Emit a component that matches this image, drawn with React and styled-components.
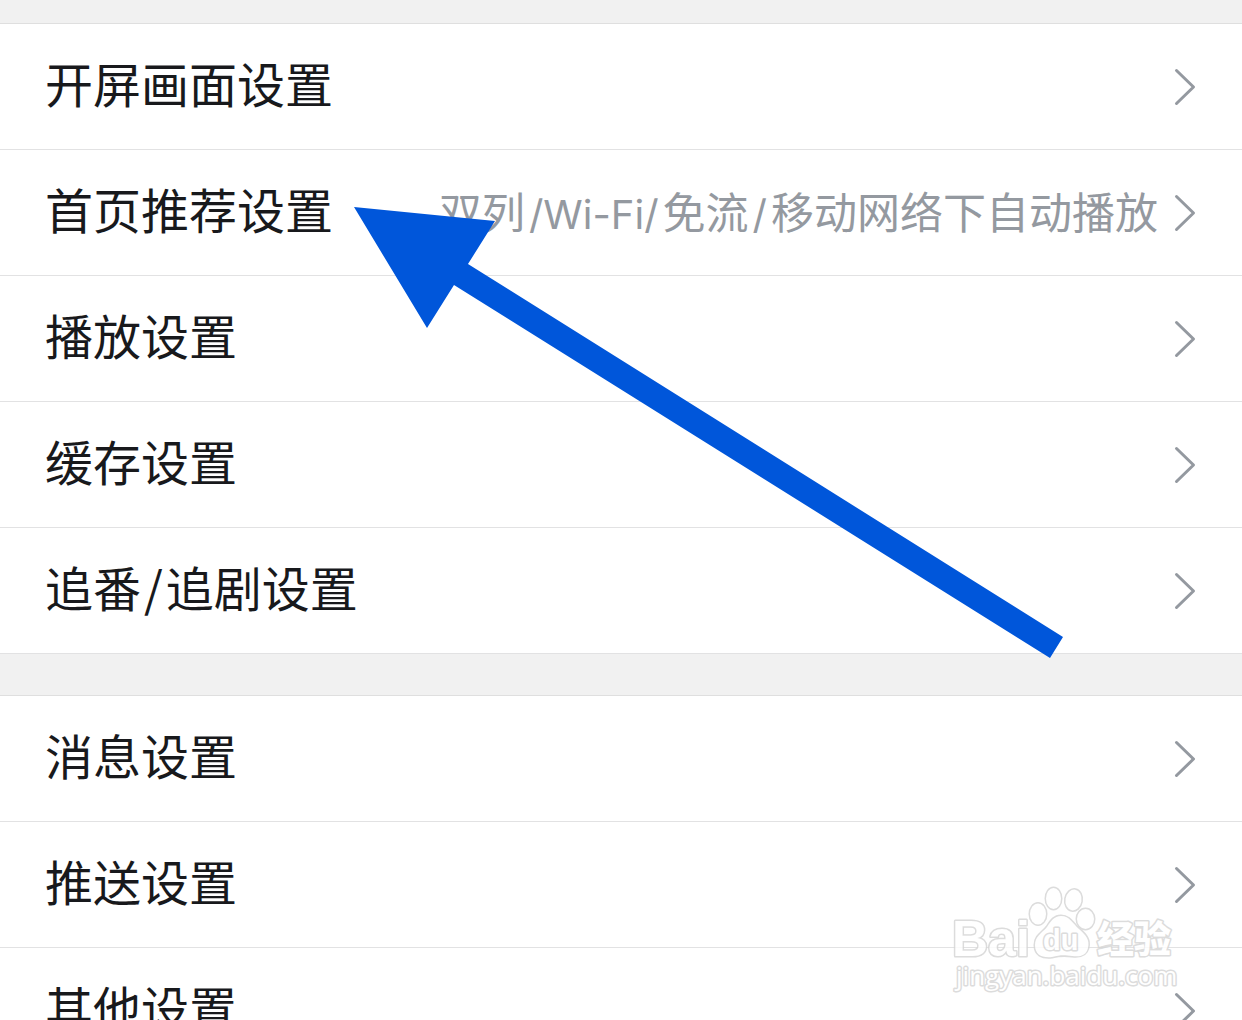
import React from 'react'
import styled, { createGlobalStyle } from 'styled-components'

//Style
const GlobalStyle = createGlobalStyle`
    *{
        box-sizing: border-box;
    }
    body{
        margin: 0;
        background: #f1f1f1;
        font-family: Inter, "Noto Sans CJK SC", sans-serif;
    }
`

const Page = styled.main`
    position: relative;
    height: 100vh;
    padding-top: 23px;
    overflow: hidden;
`

const Group = styled.nav`
    margin-bottom: 41px;
    border-top: 1px solid #dfdfdf;
    background: #ffffff;
`

const Row = styled.a`
    display: flex;
    align-items: center;
    height: 126px;
    padding: 0 46px 0 45px;
    border-bottom: 1px solid #e2e2e3;
    color: #18191c;
    text-decoration: none;
`

const Label = styled.span`
    flex: 1;
    padding-bottom: 2px;
    font-size: 48px;
    line-height: 72px;
    white-space: nowrap;
`

const Value = styled.span`
    margin-right: 16px;
    color: #9499a0;
    font-size: 43px;
    line-height: 72px;
    white-space: nowrap;
`

const Slash = styled.span`
    margin: 0 3px;
    font-family: "Noto Sans CJK SC", sans-serif;
    line-height: 1;
`

const Latin = styled.span`
    margin: 0 4px;
    font-size: 40px;
    line-height: 1;
`

const Chevron = styled.svg`
    flex: none;
    width: 22px;
    height: 40px;
    fill: none;
    stroke: #9499a0;
    stroke-width: 3;
    stroke-linecap: round;
    stroke-linejoin: round;
`

const Arrow = styled.svg`
    position: absolute;
    top: 207px;
    left: 354px;
    width: 710px;
    height: 452px;
    fill: #0056da;
    pointer-events: none;
`

const Watermark = styled.svg`
    position: absolute;
    right: 62px;
    bottom: 22px;
    width: 230px;
    height: 116px;
    fill: #ffffff;
    stroke: #d6d6d6;
    stroke-width: 3;
    stroke-linejoin: round;
    paint-order: stroke;
    opacity: 0.85;
    pointer-events: none;
`

const groups = [
    [
        { id: 'splash', title: '开屏画面设置' },
        { id: 'home', title: '首页推荐设置', value: '双列/Wi-Fi/免流/移动网络下自动播放' },
        { id: 'play', title: '播放设置' },
        { id: 'cache', title: '缓存设置' },
        { id: 'bangumi', title: '追番/追剧设置' },
    ],
    [
        { id: 'message', title: '消息设置' },
        { id: 'push', title: '推送设置' },
        { id: 'other', title: '其他设置' },
    ],
]

//wraps every latin run of a chinese text
const mixed = (text, Run) => text.split(/([!-~]+)/).map((part, i) => (
    i % 2 ? <Run key={i}>{part}</Run> : part
))

export default () => {
    return (
        <>
            <GlobalStyle />
            <Page>
                {groups.map((rows, i) => (
                    <Group key={i}>
                        {rows.map(row => (
                            <Row key={row.id} href={'#' + row.id}>
                                <Label>{mixed(row.title, Slash)}</Label>
                                {row.value && <Value>{mixed(row.value, Latin)}</Value>}
                                <Chevron viewBox="0 0 22 40" aria-hidden="true">
                                    <path d="M2.500 3.500L19.500 20L2.500 36.500" />
                                </Chevron>
                            </Row>
                        ))}
                    </Group>
                ))}

                <Arrow viewBox="0 0 710 452" aria-hidden="true">
                    <polygon points="0,0 141,14 114,57 709,430 696,451 100,78 73,121" />
                </Arrow>

                <Watermark viewBox="950 882 230 116">
                    <ellipse cx="1038" cy="914" rx="8" ry="10.500" />
                    <ellipse cx="1053.500" cy="898.500" rx="7.500" ry="10.500" />
                    <ellipse cx="1073.500" cy="900" rx="8" ry="10.500" transform="rotate(10 1073.500 900)" />
                    <ellipse cx="1085.500" cy="919" rx="8.500" ry="10" />
                    <path d="M1061 916C1070 916 1073 924 1079 929C1086 935 1090 940 1088 948C1086 956 1080 957 1072 956C1064 955 1060 955 1052 957C1042 958 1035 955 1035 945C1035 936 1042 933 1047 927C1051 921 1054 916 1061 916Z" />
                    <text x="952" y="956" fontFamily="Liberation Sans, sans-serif" fontSize="50" fontWeight="700">Bai</text>
                    <text x="1043" y="950" fontFamily="Liberation Sans, sans-serif" fontSize="29" fontWeight="700">du</text>
                    <text x="1097" y="953" fontFamily="Noto Sans CJK SC, sans-serif" fontSize="37" fontWeight="900">经验</text>
                    <text x="956" y="985" fontFamily="Open Sans, sans-serif" fontSize="26">jingyan.baidu.com</text>
                </Watermark>
            </Page>
        </>
    )
}
